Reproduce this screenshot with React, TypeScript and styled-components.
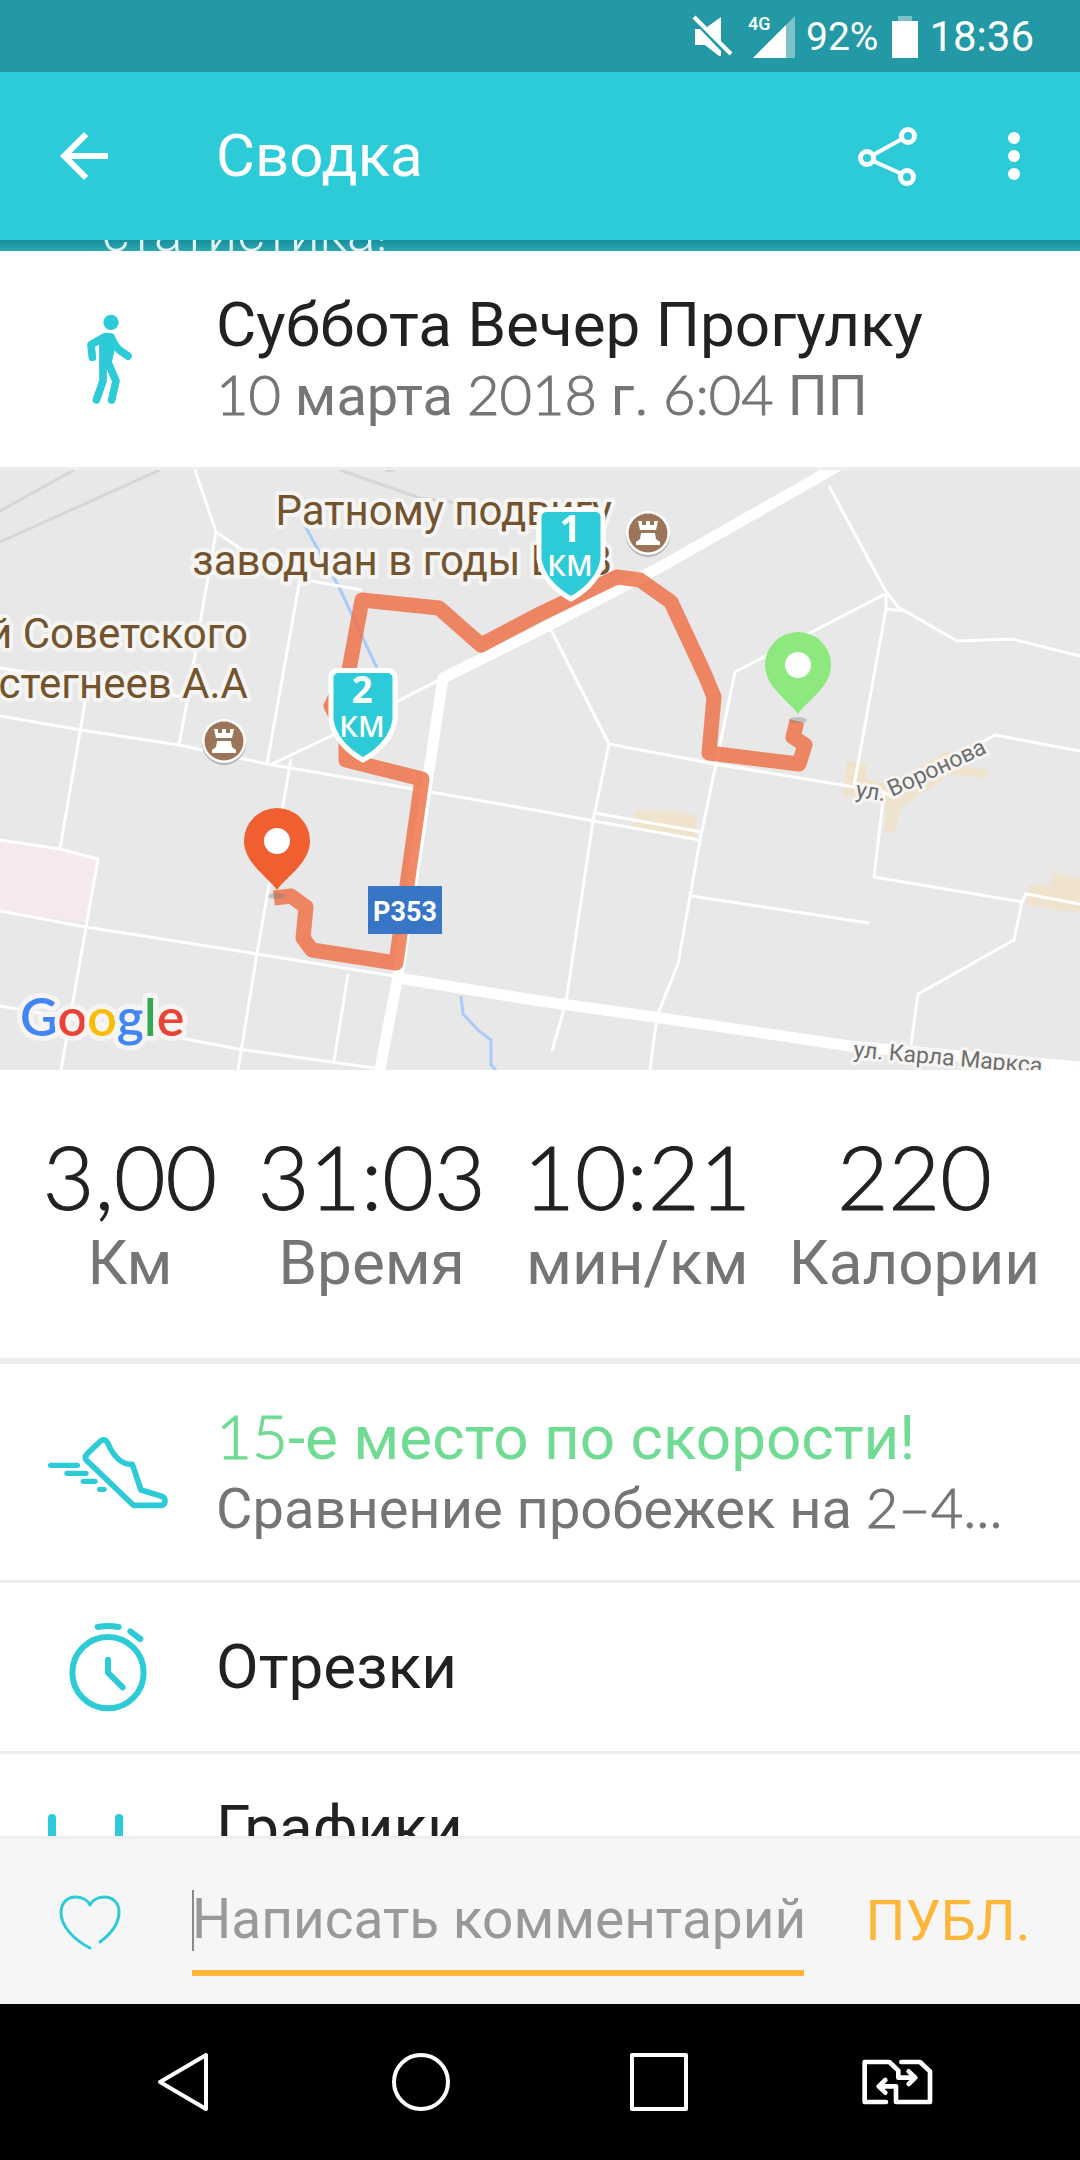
import React from "react";
import styled, { createGlobalStyle } from "styled-components";

const teal = "#2dcad7";
const ink = "#212121";
const muted = "#757575";
const amber = "#fdb63a";
const divider = "#eeeeee";

const GlobalStyle = createGlobalStyle`
  *, *::before, *::after { box-sizing: border-box; }
  body { margin: 0; background: #fff; font-family: Roboto, "Noto Sans", sans-serif; }
  button { border: 0; padding: 0; background: none; font: inherit; color: inherit; cursor: pointer; }
  svg { display: block; }
`;

const Screen = styled.div`
  display: flex;
  flex-direction: column;
  height: 100vh;
  overflow: hidden;
  color: ${ink};
`;

const StatusBar = styled.div`
  flex: none;
  display: flex;
  align-items: center;
  justify-content: flex-end;
  height: 72px;
  padding: 2px 46px 0 0;
  background: #2499a6;
  color: #fff;
`;

const StatusText = styled.span<{ $size: number }>`
  font-size: ${(p) => p.$size}px;
  line-height: 48px;
`;

const StatusIcons = styled.div`
  display: flex;
  gap: 14px;
  margin-right: 10px;
`;

const Battery = styled.div`
  margin: 0 11px 0 14px;
`;

const AppBar = styled.header`
  flex: none;
  display: flex;
  align-items: center;
  height: 168px;
  padding: 0 30px 0 48px;
  background: ${teal};
  color: #fff;
`;

const BarTitle = styled.h1`
  flex: 1;
  margin: 0 0 0 96px;
  font-size: 60px;
  line-height: 70px;
  font-weight: 400;
`;

const BarActions = styled.div`
  display: flex;
  gap: 54px;
`;

const Content = styled.main`
  flex: 1;
  min-height: 0;
  overflow: hidden;
  background: #fff;
`;

const Banner = styled.div`
  display: flex;
  align-items: flex-end;
  height: 11px;
  padding: 0 102px;
  overflow: hidden;
  background: linear-gradient(#188e99, #2ba9b4);
  color: #e2f3f4;
  font-size: 53px;
  font-weight: 300;
  line-height: 36px;
`;

const Row = styled.section<{ $single?: boolean }>`
  display: grid;
  grid-template-columns: 216px minmax(0, 1fr);
  padding: ${(p) => (p.$single ? 47 : 37)}px 0;
  border-bottom: 3px solid ${divider};
`;

const RowIcon = styled.div<{ $top?: boolean }>`
  display: flex;
  align-items: ${(p) => (p.$top ? "flex-start" : "center")};
  justify-content: center;
  height: 0;
  min-height: 100%;
  color: ${teal};
  ${(p) => p.$top && "padding-top: 22px;"}
`;

const RowTitle = styled.h2<{ $accent?: boolean }>`
  margin: 0;
  font-size: 62px;
  line-height: 74px;
  font-weight: 400;
  white-space: nowrap;
  color: ${(p) => (p.$accent ? "#70db93" : ink)};
`;

const RowNote = styled.p`
  margin: 0;
  font-size: 56px;
  line-height: 68px;
  white-space: nowrap;
  color: ${muted};
`;

const Num = styled.span`
  font-family: Lato, Roboto, sans-serif;
  font-weight: 300;
  line-height: 1;
  -webkit-text-stroke: 1px currentColor;
`;

const MapView = styled.svg`
  width: 100%;
  height: auto;
  background: #e8e8e8;
`;

const Stats = styled.dl`
  display: flex;
  justify-content: space-between;
  margin: 0;
  padding: 54px 40px 60px;
  border-bottom: 6px solid ${divider};
`;

const Stat = styled.div`
  display: flex;
  flex-direction: column-reverse;
  align-items: center;
  min-width: 180px;
`;

const StatLabel = styled.dt`
  font-size: 62px;
  line-height: 70px;
  color: ${muted};
`;

const StatValue = styled.dd`
  margin: 0;
  font-family: Lato, Roboto, sans-serif;
  font-weight: 300;
  font-size: 89px;
  line-height: 104px;
  -webkit-text-stroke: 1px currentColor;
`;

const CommentBar = styled.form`
  flex: none;
  display: grid;
  grid-template-columns: 192px minmax(0, 1fr) 276px;
  height: 168px;
  border-top: 3px solid ${divider};
  background: #f6f6f6;
`;

const LikeButton = styled.button`
  display: flex;
  align-items: center;
  padding-left: 54px;
  color: ${teal};
`;

const Field = styled.div`
  position: relative;
  align-self: start;
  margin-top: 47px;

  &::before {
    content: "";
    position: absolute;
    left: 0;
    top: 4px;
    width: 2px;
    height: 61px;
    background: #8a8a8a;
  }
`;

const CommentInput = styled.input`
  display: block;
  width: 100%;
  height: 90px;
  padding: 0 0 18px;
  border: 0;
  border-bottom: 6px solid ${amber};
  border-radius: 0;
  outline: 0;
  background: transparent;
  font-family: Roboto, sans-serif;
  font-size: 55px;
  color: ${ink};

  &::placeholder { color: #999; opacity: 1; }
`;

const PostButton = styled.button`
  align-self: start;
  margin-top: 46px;
  padding-left: 12px;
  font-size: 56px;
  line-height: 72px;
  color: ${amber};
`;

const NavBar = styled.nav`
  flex: none;
  display: grid;
  grid-template-columns: repeat(4, 1fr);
  height: 156px;
  padding: 0 64px;
  background: #000;
  color: #fff;
`;

const NavButton = styled.button`
  display: flex;
  align-items: center;
  justify-content: center;
  color: #fff;
`;

const roads = [
  "M195 0L216 62L241 79L300 109L362 120",
  "M216 62L203 136L188 227L179 275",
  "M300 109L267 294",
  "M0 198L183 227",
  "M0 246L81 260L179 275L267 294L413 319L540 341L594 351L700 370",
  "M86 227L60 379",
  "M0 370L60 379L98 389L86 457L61 600",
  "M0 441L86 457L257 484L394 506",
  "M0 536L186 569L238 579L375 598",
  "M291 289L257 484L238 600",
  "M272 294L329 267L400 230L441 209",
  "M348 504L334 591",
  "M829 16L885 120L898 137L957 171L1012 169L1080 186",
  "M885 124L735 202L716 294L700 370L678 494L657 546L650 600",
  "M886 124V139L854 316M886 139L905 141",
  "M550 158L609 274L715 294L854 317L884 322L891 326L984 271L995 265L1080 281",
  "M609 274L593 351L566 532L552 581",
  "M595 343L701 362",
  "M884 322L874 407L1022 432L1026 424L1080 434",
  "M1022 432L1014 470L918 524L911 575",
  "M692 426L869 453",
];

const halo = { stroke: "#f6f5f3", strokeLinejoin: "round" as const, paintOrder: "stroke" };

const PlaceLabel = styled.text`
  font-family: Roboto, sans-serif;
  font-size: 42px;
  fill: #74532f;
  text-anchor: end;
`;

const StreetLabel = styled.text`
  font-family: Roboto, sans-serif;
  font-size: 23px;
  fill: #6e6e6e;
`;

const RoadNumber = styled.text`
  font-family: Roboto, sans-serif;
  font-size: 27px;
  font-weight: 700;
  fill: #fff;
  text-anchor: middle;
`;

const ShieldText = styled.text<{ $size: number; $weight: number }>`
  font-family: "Open Sans", "Noto Sans", sans-serif;
  font-size: ${(p) => p.$size}px;
  font-weight: ${(p) => p.$weight};
  fill: #fff;
  text-anchor: middle;
`;

const MapLogo = styled.text`
  font-family: Lato, sans-serif;
  font-size: 52px;
  font-weight: 600;
`;

function Castle({ x, y }: { x: number; y: number }) {
  return (
    <g transform={`translate(${x} ${y})`}>
      <circle cy="2" r="22" fill="#b5b5b5" />
      <circle r="22" fill="#fff" />
      <circle r="19.500" fill="#9c7559" />
      <path
        fill="#fff"
        d="M-10-12h4v4h4v-4h4v4h4v-4h4L8-3H-8ZM-7 0H7L8 6L12 9V12H-12V9L-8 6Z"
      />
    </g>
  );
}

function Pin({ x, y, color }: { x: number; y: number; color: string }) {
  return (
    <g transform={`translate(${x} ${y})`}>
      <ellipse cy="55" rx="9" ry="3" fill="#777" opacity="0.35" />
      <path fill={color} d="M0 49C-9 36-33 22-33 0A33 33 0 1 1 33 0C33 22 9 36 0 49Z" />
      <circle r="13" fill="#fff" />
    </g>
  );
}

function Shield({ x, y, km }: { x: number; y: number; km: number }) {
  return (
    <g transform={`translate(${x} ${y})`}>
      <path
        fill={teal}
        stroke="#fff"
        strokeWidth="5"
        strokeLinejoin="round"
        d="M-24 2.500H24Q32 2.500 32 10.500V52Q28 76 0 92Q-28 76-32 52V10.500Q-32 2.500-24 2.500Z"
      />
      <ShieldText $size={37} $weight={700} x="-1" y="35">{km}</ShieldText>
      <ShieldText $size={29} $weight={600} x="-1" y="69">КМ</ShieldText>
    </g>
  );
}

function RouteMap() {
  return (
    <MapView viewBox="0 0 1080 600" role="img" aria-label="Карта маршрута">
      <g fill="none" stroke="#d6d6d6" strokeWidth="3">
        <path d="M0 41L74 0M0 72L160 0M340 0L420 28L480 36M385 1L395 0" />
      </g>
      <path fill="#f6e9ed" d="M0 370L60 379L98 389L87 453L0 441Z" />
      <g fill="#efe3ce">
        <path d="M635 340L675 341L697 346L696 369L633 360Z" />
        <path d="M847 291L867 294V310L888 314L950 279L952 294L988 300L986 309L952 304L900 338L896 362H885L886 334L843 326Z" />
        <path d="M1029 414L1050 416L1053 403L1080 408V443L1026 435Z" />
      </g>
      <g fill="none" stroke="#a8cbfa" strokeWidth="3">
        <path d="M301 49L339 117L377 198" />
        <path d="M461 526L463 544L479 561L491 570V595L496 600" />
      </g>
      <g fill="none" stroke="#fff" strokeWidth="3" strokeLinejoin="round">
        {roads.map((d) => (
          <path key={d} d={d} />
        ))}
      </g>
      <g fill="none" stroke="#fff" strokeWidth="11" strokeLinejoin="round">
        <path d="M379 604L398 506L443 208L540 160L657 99L838-4" />
        <path d="M398 508L540 531L654 547L850 576L1080 597" />
      </g>
      <PlaceLabel {...halo} strokeWidth="8" x="612" y="55">Ратному подвигу</PlaceLabel>
      <PlaceLabel {...halo} strokeWidth="8" x="612" y="105">заводчан в годы ВОВ</PlaceLabel>
      <PlaceLabel {...halo} strokeWidth="8" x="248" y="178">й Советского</PlaceLabel>
      <PlaceLabel {...halo} strokeWidth="8" x="248" y="228">стегнеев А.А</PlaceLabel>
      <path
        fill="none"
        stroke="#ee6b41"
        strokeOpacity="0.8"
        strokeWidth="15"
        strokeLinejoin="round"
        d="M797 251L793 267L805 275L799 294L709 283L714 227L705 205L671 132L640 110L617 107L540 144L481 175L439 138L362 130L349 200L331 236L346 265V290L422 309L396 493L312 480L303 468L306 437L291 426L274 428"
      />
      <StreetLabel {...halo} strokeWidth="6" transform="translate(855 327) rotate(8)">ул.</StreetLabel>
      <StreetLabel {...halo} strokeWidth="6" transform="translate(892 327) rotate(-25)">Воронова</StreetLabel>
      <StreetLabel {...halo} strokeWidth="6" transform="translate(853 587) rotate(5)">ул. Карла Маркса</StreetLabel>
      <rect x="368" y="416" width="74" height="48" fill="#3775c5" />
      <RoadNumber x="405" y="451">P353</RoadNumber>
      <Castle x={224} y={271} />
      <Castle x={648} y={63} />
      <Shield x={571} y={37} km={1} />
      <Shield x={363} y={198} km={2} />
      <Pin x={277} y={371} color="#ef5f30" />
      <Pin x={798} y={195} color="#8de87e" />
      <MapLogo {...halo} strokeWidth="10" x="20" y="566">
        <tspan fill="#4285f4">G</tspan>
        <tspan fill="#ea4335">o</tspan>
        <tspan fill="#fbbc05">o</tspan>
        <tspan fill="#4285f4">g</tspan>
        <tspan fill="#34a853">l</tspan>
        <tspan fill="#ea4335">e</tspan>
      </MapLogo>
    </MapView>
  );
}

const WalkIcon = () => (
  <svg width="96" height="96" viewBox="90 33 288 288" fill="none" stroke="currentColor" strokeLinecap="round" strokeLinejoin="round">
    <circle cx="243" cy="67" r="23" fill="currentColor" stroke="none" />
    <path fill="currentColor" stroke="none" d="M207 118Q215 98 234 98Q248 99 257 114L256 140L246 185L231 205L208 195Z" />
    <path strokeWidth="23" d="M226 110L183 134L187 172" />
    <path strokeWidth="23" d="M244 112Q256 142 272 153L294 168" />
    <path strokeWidth="23" d="M219 180V243L199 300" />
    <path strokeWidth="23" d="M232 182L258 243L245 300" />
  </svg>
);

const ShoeIcon = () => (
  <svg width="132" height="132" viewBox="36 -42 396 396" fill="none" stroke="currentColor" strokeWidth="17" strokeLinecap="round" strokeLinejoin="round">
    <path d="M212 63L172 101Q161 112 171 122L304 250Q309 256 316 256H392Q405 256 405 242Q405 232 393 228L333 210L307 133Q268 135 240 84L233 68Q224 54 212 63Z" />
    <path strokeWidth="16" d="M62 136H142M111 160H168M160 184H195M209 208H222" />
  </svg>
);

const StopwatchIcon = () => (
  <svg width="132" height="132" viewBox="34 543 396 396" fill="none" stroke="currentColor" strokeWidth="18" strokeLinecap="round" strokeLinejoin="round">
    <circle cx="232" cy="758" r="107" />
    <path d="M201 621Q232 615 264 621M299 634L329 657M232 719V758L276 802" />
  </svg>
);

const ChartIcon = () => (
  <svg width="120" height="96" viewBox="0 0 120 96" fill="none" stroke="currentColor" strokeWidth="8" strokeLinecap="round">
    <path d="M4 5V92M71 5V92" />
  </svg>
);

const stats = [
  { label: "Км", value: "3,00" },
  { label: "Время", value: "31:03" },
  { label: "мин/км", value: "10:21" },
  { label: "Калории", value: "220" },
];

export default function App() {
  return (
    <Screen>
      <GlobalStyle />
      <StatusBar>
        <StatusIcons>
          <svg width="42" height="48" viewBox="0 0 42 48" fill="#fff">
            <path d="M15 14L29 4V33ZM3 16H8L29 38V43H27L13 32H3Z" />
            <path stroke="#fff" strokeWidth="4" d="M2 4L39 41" />
          </svg>
          <svg width="48" height="48" viewBox="0 0 48 48" fill="#fff">
            <path d="M5 45L47 3V45Z" opacity="0.4" />
            <path d="M5 45L38 12V45Z" />
            <text x="0" y="17" fontSize="18" fontFamily="Roboto, sans-serif" fontWeight="500">4G</text>
          </svg>
        </StatusIcons>
        <StatusText $size={39}>92%</StatusText>
        <Battery>
          <svg width="26" height="48" viewBox="0 0 26 48" fill="#fff">
            <path d="M6 3H20V8H6Z" opacity="0.4" />
            <path d="M0 8H26V45H0Z" />
          </svg>
        </Battery>
        <StatusText $size={42}>18:36</StatusText>
      </StatusBar>

      <AppBar>
        <button type="button" aria-label="Назад">
          <svg width="72" height="72" viewBox="0 0 24 24" fill="#fff">
            <path d="M20 11H7.830l5.590-5.590L12 4l-8 8 8 8 1.410-1.410L7.830 13H20v-2z" />
          </svg>
        </button>
        <BarTitle>Сводка</BarTitle>
        <BarActions>
          <button type="button" aria-label="Поделиться">
            <svg width="72" height="72" viewBox="0 0 72 72" fill="none" stroke="#fff" strokeWidth="5">
              <path strokeWidth="4" d="M21 35L50 19M21 41L50 54" />
              <circle cx="15" cy="38" r="6.500" />
              <circle cx="56" cy="16" r="6.500" />
              <circle cx="55" cy="57" r="6.500" />
            </svg>
          </button>
          <button type="button" aria-label="Меню">
            <svg width="72" height="72" viewBox="0 0 24 24" fill="#fff">
              <circle cx="12" cy="6" r="2" />
              <circle cx="12" cy="12" r="2" />
              <circle cx="12" cy="18" r="2" />
            </svg>
          </button>
        </BarActions>
      </AppBar>

      <Content>
        <Banner>статистика!</Banner>

        <Row>
          <RowIcon><WalkIcon /></RowIcon>
          <div>
            <RowTitle>Суббота Вечер Прогулку</RowTitle>
            <RowNote>
              <Num>10</Num> марта <Num>2018</Num> г. <Num>6:04</Num> ПП
            </RowNote>
          </div>
        </Row>

        <RouteMap />

        <Stats>
          {stats.map((s) => (
            <Stat key={s.label}>
              <StatLabel>{s.label}</StatLabel>
              <StatValue>{s.value}</StatValue>
            </Stat>
          ))}
        </Stats>

        <Row>
          <RowIcon><ShoeIcon /></RowIcon>
          <div>
            <RowTitle $accent><Num>15</Num>-е место по скорости!</RowTitle>
            <RowNote>Сравнение пробежек на <Num>2–4...</Num></RowNote>
          </div>
        </Row>

        <Row $single>
          <RowIcon><StopwatchIcon /></RowIcon>
          <RowTitle>Отрезки</RowTitle>
        </Row>

        <Row>
          <RowIcon $top><ChartIcon /></RowIcon>
          <RowTitle>Графики</RowTitle>
        </Row>
      </Content>

      <CommentBar onSubmit={(e) => e.preventDefault()}>
        <LikeButton type="button" aria-label="Нравится">
          <svg width="72" height="72" viewBox="0 0 72 72" fill="none" stroke="currentColor" strokeWidth="3" strokeLinecap="round" strokeLinejoin="round">
            <path d="M46 56C58 47 65 36 65 26C65 16 58 11 50 11C43 11 38 15 36 19C34 15 29 11 22 11C14 11 7 16 7 27C7 40 20 54 36 62" />
          </svg>
        </LikeButton>
        <Field>
          <CommentInput type="text" aria-label="Комментарий" placeholder="Написать комментарий" />
        </Field>
        <PostButton type="submit">ПУБЛ.</PostButton>
      </CommentBar>

      <NavBar>
        <NavButton type="button" aria-label="Назад">
          <svg width="60" height="60" viewBox="0 0 60 60" fill="none" stroke="currentColor" strokeWidth="4" strokeLinejoin="round">
            <path d="M7 30L53 3V57Z" />
          </svg>
        </NavButton>
        <NavButton type="button" aria-label="Домой">
          <svg width="60" height="60" viewBox="0 0 60 60" fill="none" stroke="currentColor" strokeWidth="4">
            <circle cx="30" cy="30" r="27" />
          </svg>
        </NavButton>
        <NavButton type="button" aria-label="Недавние">
          <svg width="60" height="60" viewBox="0 0 60 60" fill="none" stroke="currentColor" strokeWidth="4" strokeLinejoin="round">
            <path d="M3 3H57V57H3Z" />
          </svg>
        </NavButton>
        <NavButton type="button" aria-label="Переключить SIM">
          <svg width="84" height="84" viewBox="105 30 252 252" fill="none" stroke="currentColor" strokeWidth="14" strokeLinecap="round" strokeLinejoin="round">
            <path d="M198 216H134V96H208L235 122V143H285M266 124L286 143L266 162" />
            <path d="M244 96H300L330 124V216H228V169H178M196 150L176 169L196 188" />
          </svg>
        </NavButton>
      </NavBar>
    </Screen>
  );
}
